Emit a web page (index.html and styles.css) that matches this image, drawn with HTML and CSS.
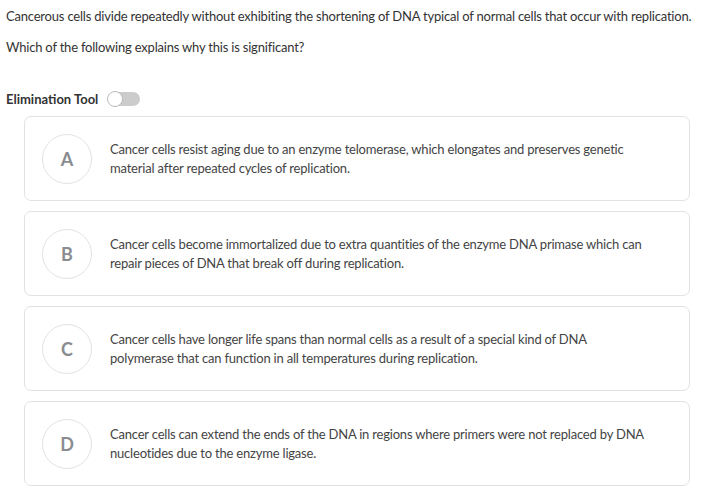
FILE: index.html
```html
<!DOCTYPE html>
<html>
<head>
<meta charset="utf-8">
<link rel="stylesheet" href="styles.css">
</head>
<body>
<div class="page">
  <p class="q">Cancerous cells divide repeatedly without exhibiting the shortening of DNA typical of normal cells that occur with replication.</p>
  <p class="q q2">Which of the following explains why this is significant?</p>
  <div class="elim">
    <span class="elim-label">Elimination Tool</span>
    <span class="toggle"><span class="knob"></span></span>
  </div>
  <div class="choices">
    <div class="choice">
      <div class="letter">A</div>
      <div class="text">Cancer cells resist aging due to an enzyme telomerase, which elongates and preserves genetic material after repeated cycles of replication.</div>
    </div>
    <div class="choice">
      <div class="letter">B</div>
      <div class="text">Cancer cells become immortalized due to extra quantities of the enzyme DNA primase which can repair pieces of DNA that break off during replication.</div>
    </div>
    <div class="choice">
      <div class="letter">C</div>
      <div class="text">Cancer cells have longer life spans than normal cells as a result of a special kind of DNA polymerase that can function in all temperatures during replication.</div>
    </div>
    <div class="choice">
      <div class="letter">D</div>
      <div class="text">Cancer cells can extend the ends of the DNA in regions where primers were not replaced by DNA nucleotides due to the enzyme ligase.</div>
    </div>
  </div>
</div>
</body>
</html>
```
FILE: styles.css
```css
* { box-sizing: border-box; }
html, body { margin: 0; padding: 0; background: #fff; }
body {
  font-family: Lato, "Open Sans", sans-serif;
  font-size: 13px;
  color: #333;
}
.page { padding: 7px 0 0 6px; }
.q { margin: 0; line-height: 18px; letter-spacing: -0.2px; }
.q2 { margin-top: 13px; }
.elim {
  display: flex;
  align-items: center;
  gap: 10px;
  margin-top: 34px;
  height: 18px;
}
.elim-label { font-weight: 700; color: #333; letter-spacing: 0; }
.toggle {
  position: relative;
  width: 32px;
  height: 14px;
  border-radius: 7px;
  background: #ccc;
}
.knob {
  position: absolute;
  left: -1px;
  top: -1px;
  width: 16px;
  height: 16px;
  border-radius: 50%;
  background: #fff;
  border: 1px solid #bbb;
}
.choices {
  display: flex;
  flex-direction: column;
  gap: 10px;
  margin: 8px 23px 0 18px;
}
.choice {
  display: flex;
  align-items: center;
  gap: 18px;
  min-height: 85px;
  padding: 0 17px;
  border: 1px solid #e2e2e2;
  border-radius: 7px;
}
.letter {
  flex: none;
  width: 50px;
  height: 50px;
  border-radius: 50%;
  border: 1px solid #e2e2e2;
  display: flex;
  align-items: center;
  justify-content: center;
  font-size: 18px;
  font-weight: 700;
  color: #8a8d90;
}
.text {
  line-height: 19px;
  color: #444;
  letter-spacing: -0.2px;
  padding-right: 20px;
}
```
